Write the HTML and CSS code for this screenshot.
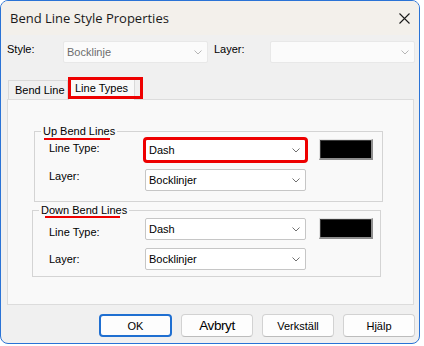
FILE: index.html
```html
<!DOCTYPE html>
<html>
<head>
<meta charset="utf-8">
<link rel="stylesheet" href="styles.css">
</head>
<body>
<div class="dialog">
  <div class="titlebar">
    <span class="title">Bend Line Style Properties</span>
    <svg class="close" width="11" height="11" viewBox="0 0 11 11"><path d="M0.5 0.5L10.5 10.5M10.5 0.5L0.5 10.5" stroke="#1b1b1b" stroke-width="1.1" fill="none"/></svg>
  </div>
  <div class="body">
    <div class="top-row">
      <span class="lbl lbl-top">Style:</span>
      <div class="combo combo-disabled"><span>Bocklinje</span><svg class="chev" width="8" height="5" viewBox="0 0 8 5"><path d="M0.5 0.5L4 4L7.5 0.5" fill="none" stroke="#b5b5b5"/></svg></div>
      <span class="lbl lbl-top lbl-layer">Layer:</span>
      <div class="combo combo-disabled"><span></span><svg class="chev" width="8" height="5" viewBox="0 0 8 5"><path d="M0.5 0.5L4 4L7.5 0.5" fill="none" stroke="#b5b5b5"/></svg></div>
    </div>
    <div class="tabs">
      <div class="tab">Bend Line</div>
      <div class="tab tab-active">Line Types</div>
    </div>
    <div class="panel">
      <fieldset class="group group-up">
        <legend class="legend legend-up">Up Bend Lines</legend>
        <div class="row">
          <span class="lbl lbl-field off-2">Line Type:</span>
          <div class="combo combo-field combo-marked"><span>Dash</span><svg class="chev" width="8" height="5" viewBox="0 0 8 5"><path d="M0.5 0.5L4 4L7.5 0.5" fill="none" stroke="#707070"/></svg></div>
          <div class="swatch"></div>
        </div>
        <div class="row">
          <span class="lbl lbl-field off-0">Layer:</span>
          <div class="combo combo-field"><span>Bocklinjer</span><svg class="chev" width="8" height="5" viewBox="0 0 8 5"><path d="M0.5 0.5L4 4L7.5 0.5" fill="none" stroke="#707070"/></svg></div>
        </div>
      </fieldset>
      <fieldset class="group group-down">
        <legend class="legend legend-down">Down Bend Lines</legend>
        <div class="row">
          <span class="lbl lbl-field off-7">Line Type:</span>
          <div class="combo combo-field"><span>Dash</span><svg class="chev" width="8" height="5" viewBox="0 0 8 5"><path d="M0.5 0.5L4 4L7.5 0.5" fill="none" stroke="#707070"/></svg></div>
          <div class="swatch"></div>
        </div>
        <div class="row">
          <span class="lbl lbl-field off-4">Layer:</span>
          <div class="combo combo-field"><span>Bocklinjer</span><svg class="chev" width="8" height="5" viewBox="0 0 8 5"><path d="M0.5 0.5L4 4L7.5 0.5" fill="none" stroke="#707070"/></svg></div>
        </div>
      </fieldset>
    </div>
    <div class="buttons">
      <div class="btn btn-default">OK</div>
      <div class="btn btn-big">Avbryt</div>
      <div class="btn">Verkställ</div>
      <div class="btn">Hjälp</div>
    </div>
  </div>
</div>
</body>
</html>
```
FILE: styles.css
```css
*, *::before, *::after { box-sizing: border-box; }
html, body { margin: 0; padding: 0; }
body {
  width: 424px;
  height: 346px;
  overflow: hidden;
  background: #ffffff;
  font-family: "Liberation Sans", Arial, sans-serif;
  font-size: 11px;
  color: #000;
}
.dialog {
  width: 420px;
  height: 344px;
  border: 1px solid #2a73d6;
  border-radius: 8px;
  background: #f0f0f0;
  overflow: hidden;
  display: flex;
  flex-direction: column;
}
.titlebar {
  height: 34px;
  flex: none;
  display: flex;
  align-items: center;
  justify-content: space-between;
  padding: 0 9px 0 9px;
  background: #f3f0eb;
}
.title {
  font-family: "Open Sans", "Noto Sans", sans-serif;
  font-size: 13px;
  color: #1a1a1a;
}
.close { display: block; }
.body {
  padding: 6px 4px 0 6px;
  display: flex;
  flex-direction: column;
}
.top-row {
  display: grid;
  grid-template-columns: 56px 145px 62px 145px;
  align-items: start;
}
.lbl { line-height: 14px; white-space: nowrap; }
.lbl-top { padding-top: 1px; }
.lbl-layer { padding-left: 6px; }
.combo {
  display: flex;
  align-items: center;
  justify-content: space-between;
  height: 22px;
  padding: 0 5px 0 3px;
  border: 1px solid #c6c6c6;
  border-radius: 2px;
  background: #fff;
  line-height: 20px;
}
.combo-disabled {
  border-color: #e8e8e8;
  background: #fbfbfb;
  color: #6d6d6d;
}
.chev { display: block; flex: none; }
.tabs {
  display: flex;
  align-items: flex-end;
  height: 22px;
  margin: 14px 0 0 1px;
}
.tab {
  width: 60px;
  height: 19px;
  padding: 0 0 0 6px;
  line-height: 18px;
  border: 1px solid #d9d9d9;
  border-bottom: none;
  background: #f0f0f0;
  white-space: nowrap;
}
.tab-active {
  width: 67px;
  height: 23px;
  margin-bottom: -1px;
  line-height: 21px;
  background: #f9f9f9;
  position: relative;
  z-index: 1;
}
.tab-active::after {
  content: "";
  position: absolute;
  left: -1px;
  top: -1px;
  width: 75px;
  height: 22px;
  border: 3px solid #ee0000;
}
.panel {
  width: 407px;
  height: 206px;
  border: 1px solid #dcdcdc;
  background: #f9f9f9;
  padding-top: 24px;
}
.group {
  width: 349px;
  min-width: 0;
  border: 1px solid #d4d4d4;
}
.group-up { margin: 0 0 0 26px; padding: 1px 0 10px 14px; }
.group-down { margin: 1px 0 0 24px; padding: 1px 0 6px 16px; }
.legend {
  padding: 0 2px;
  line-height: 14px;
  position: relative;
}
.legend-up { margin-left: -8px; }
.legend-down { margin-left: -10px; }
.legend::after {
  content: "";
  position: absolute;
  height: 2px;
  background: #ee0000;
}
.legend-up::after { left: 3px; top: 14px; width: 66px; }
.legend-down::after { left: 6px; top: 13px; width: 75px; }
.row { display: flex; align-items: flex-start; }
.row + .row { margin-top: 8px; }
.lbl-field { width: 96px; }
.off-0 { padding-top: 0; }
.off-2 { padding-top: 2px; }
.off-4 { padding-top: 4px; }
.off-7 { padding-top: 7px; }
.combo-field { width: 161px; }
.combo-marked {
  outline: 3px solid #ee0000;
  outline-offset: -1px;
}
.swatch {
  width: 54px;
  height: 21px;
  margin-left: 13px;
  background: #000;
  border-style: solid;
  border-width: 1px 2px 2px 1px;
  border-color: #e2e2e2 #8e8e8e #8e8e8e #e2e2e2;
  box-shadow: inset 1px 1px 0 #3a3a3a;
}
.buttons {
  display: flex;
  justify-content: flex-end;
  gap: 9px;
  margin-top: 9px;
}
.btn {
  width: 72px;
  height: 23px;
  display: flex;
  align-items: center;
  justify-content: center;
  border: 1px solid #d2d2d2;
  border-bottom-color: #bcbcbc;
  border-radius: 4px;
  background: #fdfdfd;
  white-space: nowrap;
}
.btn-default {
  width: 73px;
  border: 2px solid #1f6fd1;
}
.btn-big {
  font-size: 13.5px;
  letter-spacing: -0.4px;
}
```
